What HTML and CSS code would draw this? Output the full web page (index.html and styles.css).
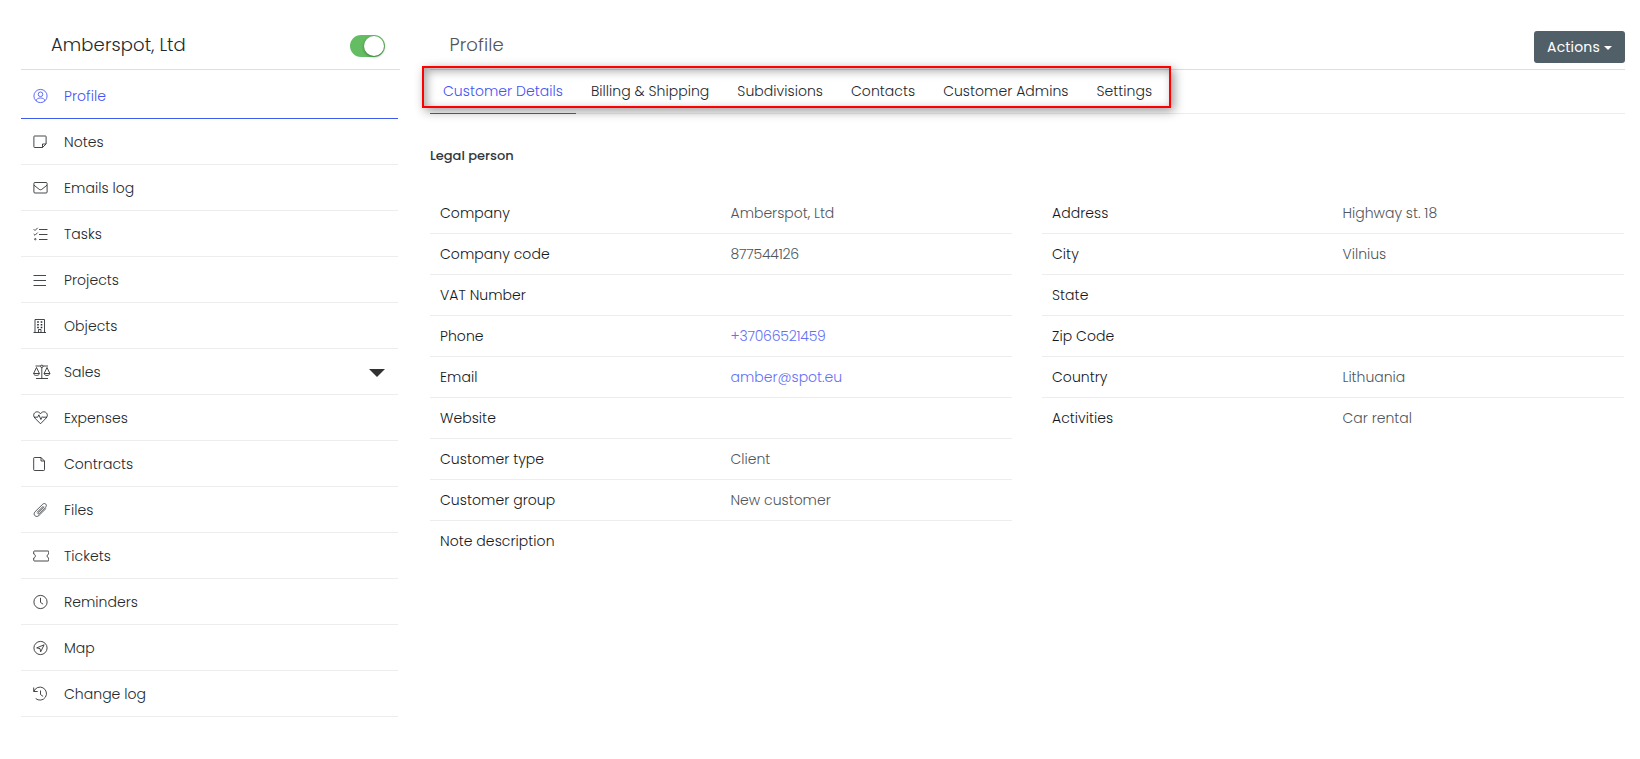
FILE: index.html
```html
<!DOCTYPE html>
<html lang="en">
<head>
  <meta charset="UTF-8">
  <meta name="viewport" content="width=device-width, initial-scale=1.0">
  <title>Customer Profile</title>
  <link rel="stylesheet" href="styles.css">
</head>

<body>
  <div class="page">

    <!-- Left menu -->
    <aside class="sidebar">
      <div class="sidebar-header">
        <h1>Amberspot, Ltd</h1>
        <span class="switch"></span>
      </div>
      <nav class="menu">
        <a class="menu-item active" href="#">
          <svg class="icon" viewBox="0 0 16 16"><circle cx="7.500" cy="8" r="6.600"/><circle cx="7.500" cy="6.300" r="2.300"/><path d="M3.200 12.900c.3-2 1.700-2.900 4.300-2.900s4 .9 4.300 2.900"/></svg>
          <span class="label">Profile</span>
        </a>
        <a class="menu-item" href="#">
          <svg class="icon" viewBox="0 0 16 16"><path d="M1.500 2h11a.6.6 0 0 1 .6.6V10L9.500 13.500h-8a.6.6 0 0 1-.6-.6V2.600a.6.6 0 0 1 .6-.6zM13 10H9.500v3.500"/></svg>
          <span class="label">Notes</span>
        </a>
        <a class="menu-item" href="#">
          <svg class="icon" viewBox="0 0 16 16"><rect x=".9" y="2.500" width="13.200" height="10.500" rx="1"/><path d="M1 5.200l5 4c1 .8 2 .8 3 0l5-4"/></svg>
          <span class="label">Emails log</span>
        </a>
        <a class="menu-item" href="#">
          <svg class="icon" viewBox="0 0 16 16"><path d="M6 3.500h8.500M6 8.500h8.500M6 13.500h8.500M.7 3.200L2 4.500l2.700-2.700M.7 8L2 9.300l2.700-2.700"/><circle cx="2.300" cy="13.200" r=".7"/></svg>
          <span class="label">Tasks</span>
        </a>
        <a class="menu-item" href="#">
          <svg class="icon" viewBox="0 0 16 16"><path d="M.5 3.500H13M.5 8.500H13M.5 13.500H13"/></svg>
          <span class="label">Projects</span>
        </a>
        <a class="menu-item" href="#">
          <svg class="icon" viewBox="0 0 16 16"><path d="M.5 14.500H13M2 14.500v-13h9.500v13M5.500 14.500v-3H8v3"/><path d="M5 3.200v7M8.500 3.200v7" stroke-width="1.600" stroke-dasharray="1.500 1.300"/></svg>
          <span class="label">Objects</span>
        </a>
        <a class="menu-item" href="#">
          <svg class="icon icon-wide" viewBox="0 0 18 16"><path d="M2.500 2h12.500M8.800 2v12.500M3 14.500h12M3.500 3.500L.6 9.500h5.800zM14 3.500l-2.900 6h5.800zM.6 9.500c.3 2.600 5.500 2.600 5.800 0M11.100 9.500c.3 2.600 5.500 2.600 5.800 0"/><circle cx="8.800" cy="2.300" r="1.200" fill="#fff"/></svg>
          <span class="label">Sales</span>
          <span class="menu-arrow"></span>
        </a>
        <a class="menu-item" href="#">
          <svg class="icon" viewBox="0 0 16 16"><path d="M7.500 13.800L1.800 8C-.6 5.200 1.200 1.800 4.200 1.800c1.500 0 2.600.9 3.300 2 .7-1.100 1.800-2 3.300-2 3 0 4.800 3.400 2.400 6.200zM1 7.200h3.700l1.200-2.400 2 4.700 1.400-2.800.5.500H14"/></svg>
          <span class="label">Expenses</span>
        </a>
        <a class="menu-item" href="#">
          <svg class="icon" viewBox="0 0 16 16"><path d="M1.500 1.500H8L11.500 5v8.700a.8.8 0 0 1-.8.8H1.500a.8.800 0 0 1-.8-.8V2.300a.8.800 0 0 1 .8-.8zM8 1.500V5h3.500"/></svg>
          <span class="label">Contracts</span>
        </a>
        <a class="menu-item" href="#">
          <svg class="icon icon-clip" viewBox="0 0 16 16"><path d="M11 4.800L5.300 10.500c-1 1-.1 2 .9 1.100l6.300-6.300c2.300-2.400-.6-5.200-3-2.900L2.200 9.600c-3 3 .9 6.700 3.800 3.800L13.200 6.300M10.300 4.100L4 10.400"/></svg>
          <span class="label">Files</span>
        </a>
        <a class="menu-item" href="#">
          <svg class="icon" viewBox="0 0 16 16"><path d="M1.500 3h13.500a.8.800 0 0 1 .8.8V6c-2.200.3-2.200 3.700 0 4v2.200a.8.800 0 0 1-.8.8H1.500a.8.800 0 0 1-.8-.8V10c2.200-.3 2.200-3.700 0-4V3.800a.8.800 0 0 1 .8-.8z"/></svg>
          <span class="label">Tickets</span>
        </a>
        <a class="menu-item" href="#">
          <svg class="icon" viewBox="0 0 16 16"><circle cx="7.500" cy="8" r="6.600"/><path d="M7.500 3.800v4.600l2.600 1.800"/></svg>
          <span class="label">Reminders</span>
        </a>
        <a class="menu-item" href="#">
          <svg class="icon" viewBox="0 0 16 16"><circle cx="7.500" cy="8" r="6.600"/><path d="M11.100 4.800L3.700 7.900l3.300.7.700 3.200z"/></svg>
          <span class="label">Map</span>
        </a>
        <a class="menu-item" href="#">
          <svg class="icon" viewBox="0 0 16 16"><path d="M.7 1.500v4h4M.9 5.300a6.500 6.500 0 1 1 1.800 7.200M7.500 4.500v4l2.600 1.900"/></svg>
          <span class="label">Change log</span>
        </a>
      </nav>
    </aside>

    <!-- Profile content -->
    <main class="content">
      <header class="content-header">
        <h2>Profile</h2>
        <button class="actions-btn">Actions<span class="caret"></span></button>
      </header>

      <div class="tabs">
        <a class="tab active" href="#">Customer Details</a>
        <a class="tab" href="#">Billing &amp; Shipping</a>
        <a class="tab" href="#">Subdivisions</a>
        <a class="tab" href="#">Contacts</a>
        <a class="tab" href="#">Customer Admins</a>
        <a class="tab" href="#">Settings</a>
        <span class="tabs-frame"></span>
      </div>

      <h3 class="person-type">Legal person</h3>

      <div class="details">
        <dl class="table">
          <div class="row"><dt>Company</dt><dd>Amberspot, Ltd</dd></div>
          <div class="row"><dt>Company code</dt><dd class="number">877544126</dd></div>
          <div class="row"><dt>VAT Number</dt><dd></dd></div>
          <div class="row"><dt>Phone</dt><dd class="number"><a href="#">+37066521459</a></dd></div>
          <div class="row"><dt>Email</dt><dd><a href="#">amber@spot.eu</a></dd></div>
          <div class="row"><dt>Website</dt><dd></dd></div>
          <div class="row"><dt>Customer type</dt><dd>Client</dd></div>
          <div class="row"><dt>Customer group</dt><dd>New customer</dd></div>
          <div class="row"><dt>Note description</dt><dd></dd></div>
        </dl>
        <dl class="table">
          <div class="row"><dt>Address</dt><dd>Highway st. 18</dd></div>
          <div class="row"><dt>City</dt><dd>Vilnius</dd></div>
          <div class="row"><dt>State</dt><dd></dd></div>
          <div class="row"><dt>Zip Code</dt><dd></dd></div>
          <div class="row"><dt>Country</dt><dd>Lithuania</dd></div>
          <div class="row"><dt>Activities</dt><dd>Car rental</dd></div>
        </dl>
      </div>
    </main>

  </div>
</body>
</html>
```

FILE: styles.css
```css
* {
  box-sizing: border-box;
  margin: 0;
  padding: 0;
}

body {
  font-family: Poppins, Inter, sans-serif;
  font-size: 14px;
  color: #23282c;
  background: #fff;
}

a {
  color: #4453f5;
  text-decoration: none;
}

.page {
  display: flex;
  gap: 30px;
  height: 759px;
  padding: 20px 15px 0 21px;
  overflow: hidden;
}

/* Sidebar */
.sidebar {
  width: 379px;
}

.sidebar-header {
  display: flex;
  justify-content: space-between;
  align-items: center;
  height: 50px;
  padding: 2px 15px 0 30px;
  border-bottom: 1px solid #dedede;
}

.sidebar-header h1,
.content-header h2 {
  font-size: 18px;
  font-weight: 300;
  letter-spacing: 0.1px;
}

.sidebar-header h1 {
  padding-bottom: 2px;
}

.switch {
  display: flex;
  justify-content: flex-end;
  width: 35px;
  height: 22px;
  border-radius: 11px;
  background: #64bd63;
}

.switch::after {
  content: "";
  width: 20px;
  height: 20px;
  margin: 1px 1px 0 0;
  border-radius: 50%;
  background: #fff;
  box-shadow: 0 1px 3px rgba(0, 0, 0, 0.4);
}

.menu {
  padding: 3px 2px 0 0;
}

.menu-item {
  display: flex;
  align-items: center;
  height: 46px;
  padding: 0 13px 0 12px;
  border-bottom: 1px solid #ededed;
  color: #23282c;
  font-weight: 300;
}

.menu-item.active {
  border-color: #3f5bea;
  color: #4453f5;
}

.label {
  padding-top: 2px;
  letter-spacing: 0.04px;
}

.icon {
  width: 16px;
  height: 16px;
  margin-right: 15px;
  fill: none;
  stroke: currentColor;
  stroke-width: 0.85;
  stroke-linejoin: round;
}

.icon-wide {
  width: 18px;
  margin-right: 13px;
}

.icon-clip {
  stroke-width: 0.75;
}

.menu-arrow {
  margin: 2px 0 0 auto;
  border: 8px solid transparent;
  border-top-color: #323232;
  border-bottom: 0;
}

/* Content */
.content {
  flex: 1;
}

.content-header {
  display: flex;
  justify-content: space-between;
  height: 50px;
  padding-left: 19.5px;
  border-bottom: 1px solid #dedede;
}

.content-header h2 {
  line-height: 50px;
  color: #555;
}

.actions-btn {
  display: flex;
  justify-content: center;
  align-items: center;
  gap: 4px;
  width: 91px;
  height: 32px;
  margin-top: 11px;
  border: none;
  border-radius: 3px;
  background: #515f69;
  color: #fff;
  font-family: inherit;
  font-size: 14px;
  font-weight: 400;
  letter-spacing: 0.15px;
}

.caret {
  margin-top: 1px;
  border: 4px solid transparent;
  border-top-color: #fff;
  border-bottom: 0;
}

.tabs {
  position: relative;
  display: flex;
  gap: 2px;
  height: 44px;
  border-bottom: 1px solid #ededed;
}

.tab {
  height: 44px;
  padding: 0 13px;
  border-bottom: 1px solid transparent;
  line-height: 42px;
  color: #23282c;
  font-weight: 300;
  letter-spacing: 0.04px;
  white-space: nowrap;
}

.tab.active {
  border-color: #3f5bea;
  color: #4453f5;
}

/* red frame drawn over the tabs */
.tabs-frame {
  position: absolute;
  top: -4px;
  left: -8px;
  width: 749px;
  height: 42px;
  border: 2px solid #f00;
  box-shadow: 3px 3px 10px rgba(0, 0, 0, 0.4), inset 3px 3px 10px rgba(0, 0, 0, 0.35);
  pointer-events: none;
}

.person-type {
  margin-top: 32px;
  line-height: 20px;
  font-size: 13px;
  font-weight: 500;
  color: #32373b;
}

.details {
  display: grid;
  grid-template-columns: 582px 582px;
  gap: 30px;
  margin-top: 27px;
}

.row {
  display: flex;
  height: 41px;
  padding-left: 10px;
  border-bottom: 1px solid #ededed;
  line-height: 40px;
}

.row:last-child {
  border-bottom: none;
}

.row dt {
  width: 290.5px;
  color: #14181b;
  font-weight: 300;
  letter-spacing: 0.05px;
}

.row dd {
  color: #50565b;
  font-weight: 300;
}

.row dd a {
  color: #6470f6;
}

.number {
  letter-spacing: -0.22px;
}
```
